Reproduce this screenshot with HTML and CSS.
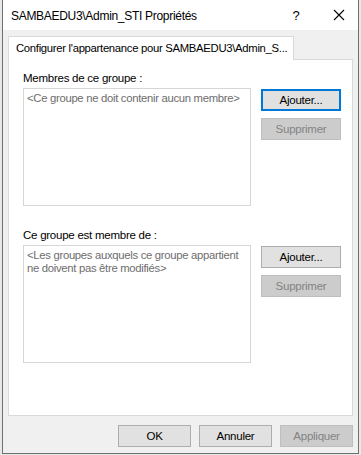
FILE: index.html
```html
<!DOCTYPE html>
<html lang="fr">
<head>
<meta charset="utf-8">
<link rel="stylesheet" href="styles.css">
</head>
<body>
<div class="window">
  <div class="titlebar">
    <span class="title">SAMBAEDU3\Admin_STI Propriétés</span>
    <span class="help">?</span>
    <span class="close">
      <svg width="12" height="12" viewBox="0 0 12 12"><path d="M1 1 L11 11 M11 1 L1 11" stroke="#000" stroke-width="1.1" fill="none"/></svg>
    </span>
  </div>
  <div class="client">
    <div class="tabs">
      <div class="tab">Configurer l'appartenance pour SAMBAEDU3\Admin_S...</div>
    </div>
    <div class="panel">
      <div class="section">
        <div class="label">Membres de ce groupe :</div>
        <div class="row">
          <div class="list list1">&lt;Ce groupe ne doit contenir aucun membre&gt;</div>
          <div class="side">
            <button class="btn focus">Ajouter...</button>
            <button class="btn disabled">Supprimer</button>
          </div>
        </div>
      </div>
      <div class="section sec2">
        <div class="label">Ce groupe est membre de :</div>
        <div class="row">
          <div class="list list2">&lt;Les groupes auxquels ce groupe appartient<br>ne doivent pas être modifiés&gt;</div>
          <div class="side">
            <button class="btn">Ajouter...</button>
            <button class="btn disabled">Supprimer</button>
          </div>
        </div>
      </div>
    </div>
    <div class="footer">
      <button class="btn fbtn">OK</button>
      <button class="btn fbtn">Annuler</button>
      <button class="btn fbtn disabled">Appliquer</button>
    </div>
  </div>
</div>
</body>
</html>
```

FILE: styles.css
```css
* { box-sizing: border-box; }
html, body { margin: 0; padding: 0; }
body {
  width: 361px;
  height: 455px;
  background: #e8e8e8;
  font-family: "Liberation Sans", Arial, sans-serif;
  font-size: 11.5px;
  letter-spacing: -0.25px;
  color: #000;
  overflow: hidden;
  padding-left: 2px;
}
.window {
  width: 357px;
  height: 454px;
  border: 1px solid #707070;
  border-top: none;
  background: #f0f0f0;
  display: flex;
  flex-direction: column;
}
.titlebar {
  height: 30px;
  background: #fff;
  display: flex;
  align-items: center;
  padding-left: 8px;
  flex: none;
}
.title {
  font-size: 12px;
  letter-spacing: -0.3px;
  flex: 1;
  padding-top: 1px;
}
.help {
  font-size: 13px;
  width: 48px;
  text-align: center;
}
.close {
  width: 38px;
  display: flex;
  justify-content: center;
  align-items: center;
}
.client {
  flex: 1;
  padding: 6px 5px 0 5px;
  display: flex;
  flex-direction: column;
}
.tabs {
  display: flex;
  height: 24px;
  position: relative;
  z-index: 1;
}
.tab {
  width: 286px;
  height: 24px;
  background: #fff;
  border: 1px solid #d9d9d9;
  border-bottom: none;
  padding: 5px 0 0 7px;
  white-space: nowrap;
  overflow: hidden;
  font-size: 11.3px;
  letter-spacing: -0.3px;
}
.panel {
  height: 357px;
  margin-top: -1px;
  background: #fff;
  border: 1px solid #d9d9d9;
  padding: 11px 11px 0 14px;
}
.label {
  height: 15px;
  line-height: 15px;
  margin-bottom: 2px;
}
.row {
  display: flex;
  align-items: flex-start;
}
.list {
  width: 228px;
  height: 118px;
  border: 1px solid #d6d6d6;
  color: #6d6d6d;
  padding: 3px 0 0 3px;
  line-height: 13px;
  font-size: 11.3px;
  letter-spacing: -0.3px;
  white-space: nowrap;
}
.side {
  margin-left: 10px;
  display: flex;
  flex-direction: column;
  gap: 7px;
}
.btn {
  width: 80px;
  height: 22px;
  background: #e1e1e1;
  border: 1px solid #adadad;
  font-family: "Liberation Sans", Arial, sans-serif;
  font-size: 11.5px;
  letter-spacing: -0.25px;
  color: #000;
  padding: 0;
  margin: 0;
}
.side .btn:first-child { margin-top: 1px; }
.btn.focus {
  border: 2px solid #0078d7;
}
.btn.disabled {
  background: #cccccc;
  border-color: #bfbfbf;
  color: #838383;
}
.sec2 { margin-top: 22px; }
.footer {
  display: flex;
  justify-content: flex-end;
  gap: 8px;
  padding-top: 9px;
}
.fbtn {
  width: 73px;
  height: 22px;
}
```
